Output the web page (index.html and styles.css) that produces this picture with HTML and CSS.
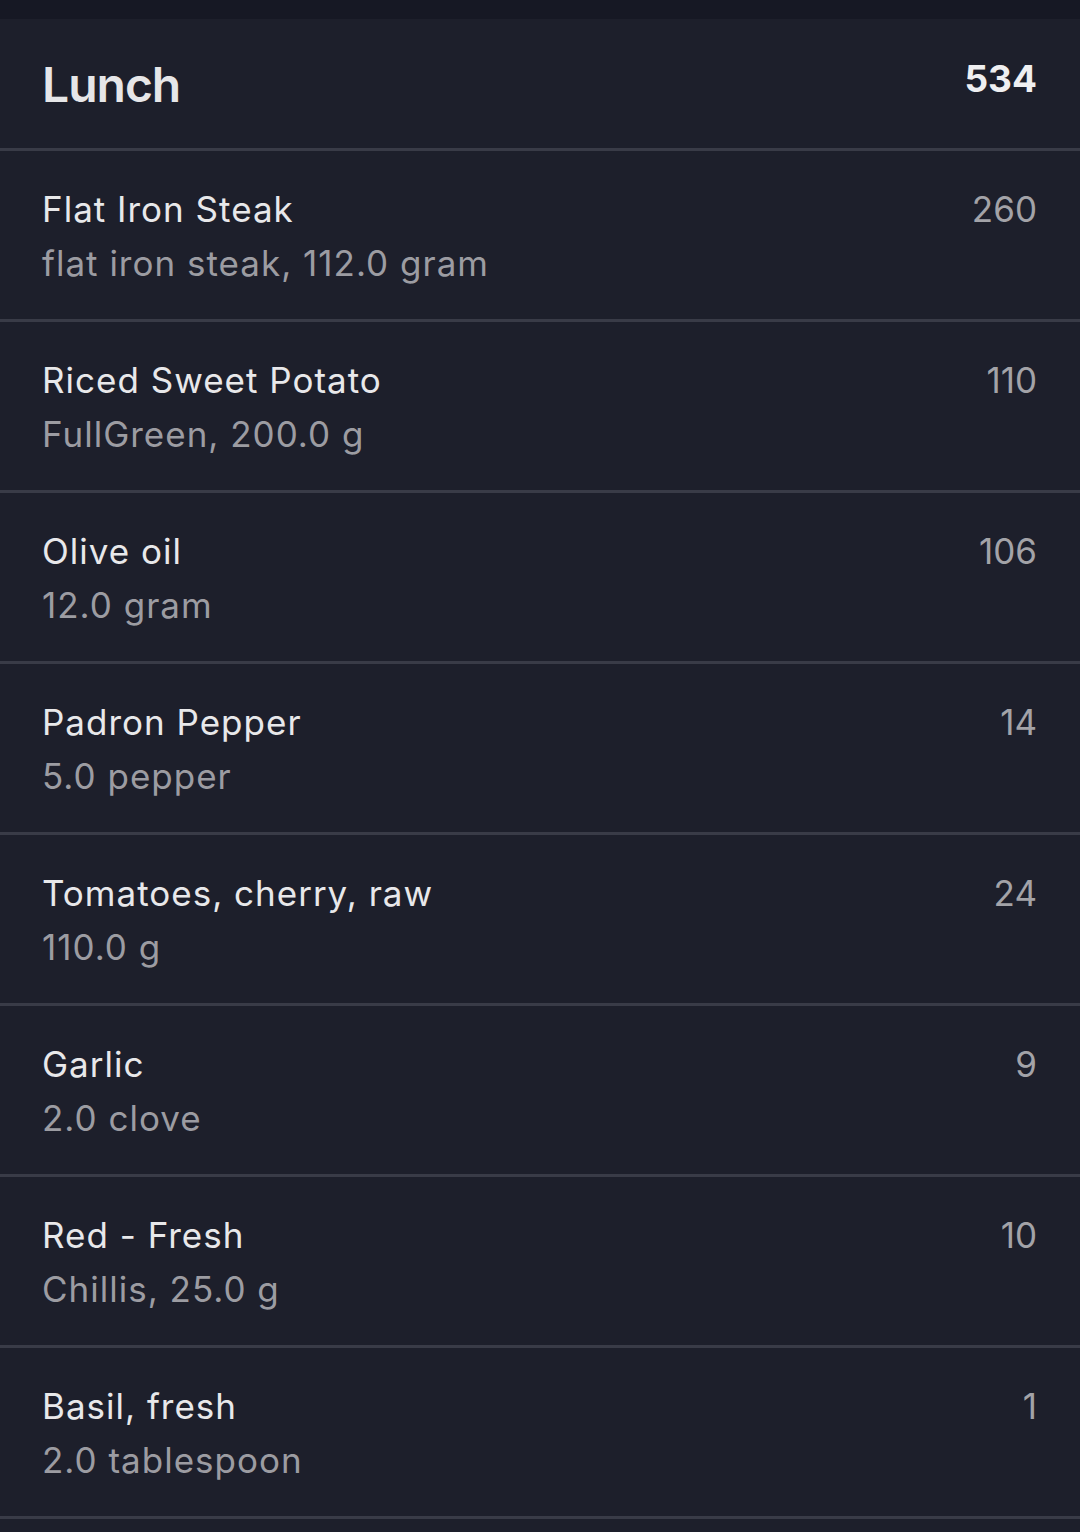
FILE: index.html
```html
<!DOCTYPE html>
<html>
<head>
<meta charset="utf-8">
<link rel="stylesheet" href="styles.css">
</head>
<body>
<div class="topbar"></div>
<section class="meal">
  <header class="meal-head">
    <h1 class="meal-title">Lunch</h1>
    <div class="meal-total">534</div>
  </header>
  <ul class="items">
    <li class="item"><div class="info"><div class="name">Flat Iron Steak</div><div class="sub">flat iron steak, 112.0 gram</div></div><div class="cal">260</div></li>
    <li class="item"><div class="info"><div class="name">Riced Sweet Potato</div><div class="sub">FullGreen, 200.0 g</div></div><div class="cal">110</div></li>
    <li class="item"><div class="info"><div class="name">Olive oil</div><div class="sub">12.0 gram</div></div><div class="cal">106</div></li>
    <li class="item"><div class="info"><div class="name">Padron Pepper</div><div class="sub">5.0 pepper</div></div><div class="cal">14</div></li>
    <li class="item"><div class="info"><div class="name">Tomatoes, cherry, raw</div><div class="sub">110.0 g</div></div><div class="cal">24</div></li>
    <li class="item"><div class="info"><div class="name">Garlic</div><div class="sub">2.0 clove</div></div><div class="cal">9</div></li>
    <li class="item"><div class="info"><div class="name">Red - Fresh</div><div class="sub">Chillis, 25.0 g</div></div><div class="cal">10</div></li>
    <li class="item"><div class="info"><div class="name">Basil, fresh</div><div class="sub">2.0 tablespoon</div></div><div class="cal">1</div></li>
  </ul>
</section>
</body>
</html>
```
FILE: styles.css
```css
* { box-sizing: border-box; }
html, body {
  margin: 0;
  padding: 0;
  background: #1d1f2b;
  font-family: Inter, "Noto Sans", sans-serif;
}
.topbar {
  height: 19px;
  background: #161824;
}
.meal-head {
  display: flex;
  justify-content: space-between;
  align-items: flex-start;
  padding: 37px 43px 34px 42px;
  border-bottom: 3px solid #393b47;
}
.meal-title {
  margin: 0;
  font-size: 48px;
  line-height: 58px;
  font-weight: 600;
  letter-spacing: -1px;
  color: #e6e6e8;
}
.meal-total {
  font-size: 37px;
  line-height: 45px;
  font-weight: 700;
  color: #efeff1;
}
.items {
  list-style: none;
  margin: 0;
  padding: 0;
}
.item {
  display: flex;
  justify-content: space-between;
  align-items: flex-start;
  height: 171px;
  padding: 31px 43px 0 42px;
  border-bottom: 3px solid #393b47;
}
.name {
  font-size: 35px;
  line-height: 54px;
  letter-spacing: 1px;
  color: #e8e8ea;
}
.sub {
  font-size: 35px;
  line-height: 54px;
  letter-spacing: 1px;
  color: #9c9ca2;
}
.cal {
  font-size: 35px;
  line-height: 54px;
  color: #a3a3a8;
}
```
